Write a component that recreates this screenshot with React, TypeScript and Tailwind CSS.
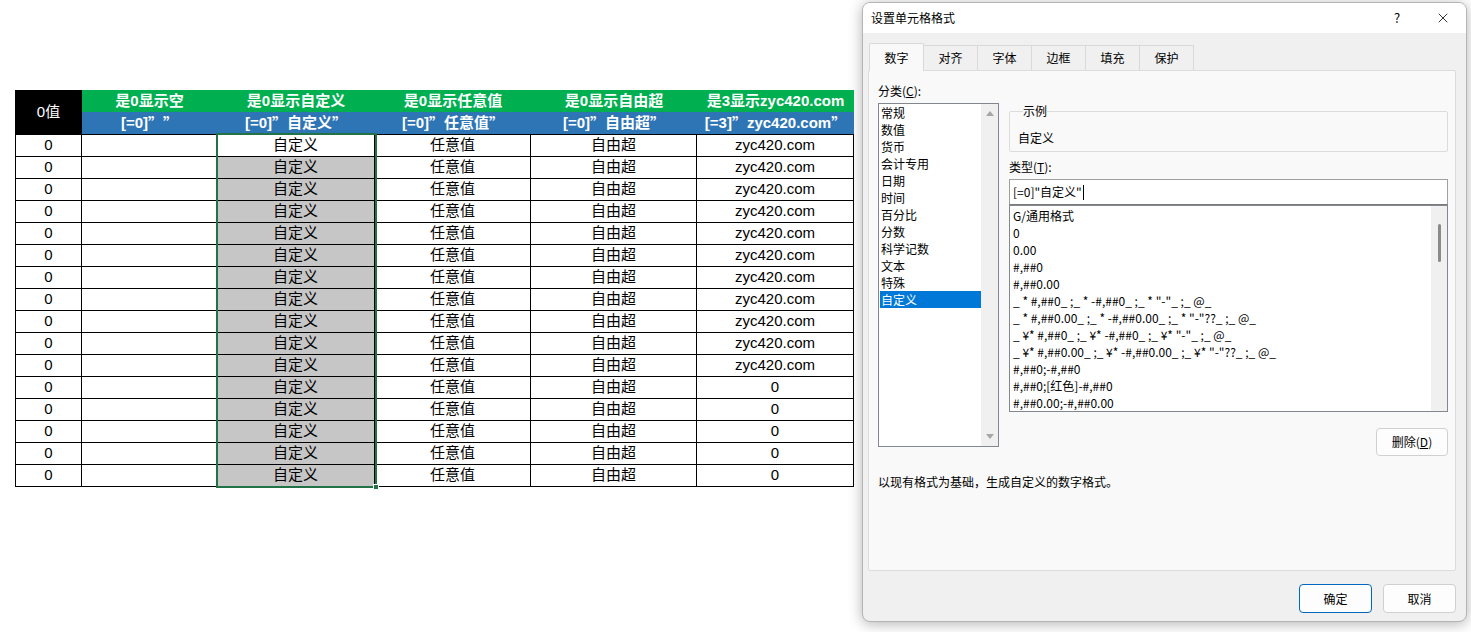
import { X } from "lucide-react";

const rows = Array.from({ length: 16 }, (_, i) => i);

const categories = [
  "常规",
  "数值",
  "货币",
  "会计专用",
  "日期",
  "时间",
  "百分比",
  "分数",
  "科学记数",
  "文本",
  "特殊",
  "自定义",
];

const formats = [
  "G/通用格式",
  "0",
  "0.00",
  "#,##0",
  "#,##0.00",
  '_ * #,##0_ ;_ * -#,##0_ ;_ * "-"_ ;_ @_',
  '_ * #,##0.00_ ;_ * -#,##0.00_ ;_ * "-"??_ ;_ @_',
  '_ ¥* #,##0_ ;_ ¥* -#,##0_ ;_ ¥* "-"_ ;_ @_',
  '_ ¥* #,##0.00_ ;_ ¥* -#,##0.00_ ;_ ¥* "-"??_ ;_ @_',
  "#,##0;-#,##0",
  "#,##0;[红色]-#,##0",
  "#,##0.00;-#,##0.00",
];

const tabs = ["数字", "对齐", "字体", "边框", "填充", "保护"];

// full-width CJK quote mark
const Q = () => <span className="font-['Noto_Sans_CJK_SC',sans-serif]">”</span>;

const Sheet = () => {
  return (
    <div className="relative ml-[15px] mt-[90px] shrink-0 font-['Liberation_Sans','Noto_Sans_CJK_SC',sans-serif] text-[15px] text-black">
      {/* header */}
      <div className="flex h-[44px]">
        <div className="flex w-[67px] items-center justify-center bg-black text-white">0值</div>
        <div className="flex flex-col">
          <div className="flex h-[22px] bg-[#00b050] font-bold text-white">
            <div className="flex w-[135px] items-center justify-center">是0显示空</div>
            <div className="flex w-[158px] items-center justify-center">是0显示自定义</div>
            <div className="flex w-[156px] items-center justify-center">是0显示任意值</div>
            <div className="flex w-[166px] items-center justify-center">是0显示自由超</div>
            <div className="flex w-[157px] items-center justify-center whitespace-nowrap">是3显示zyc420.com</div>
          </div>
          <div className="flex h-[22px] bg-[#2e75b6] font-bold text-white">
            <div className="flex w-[135px] items-center justify-center whitespace-pre">
              [=0]<Q />  <Q />
            </div>
            <div className="flex w-[158px] items-center justify-center whitespace-nowrap">
              [=0]<Q />自定义<Q />
            </div>
            <div className="flex w-[156px] items-center justify-center whitespace-nowrap">
              [=0]<Q />任意值<Q />
            </div>
            <div className="flex w-[166px] items-center justify-center whitespace-nowrap">
              [=0]<Q />自由超<Q />
            </div>
            <div className="flex w-[157px] items-center justify-center whitespace-nowrap">
              [=3]<Q />zyc420.com<Q />
            </div>
          </div>
        </div>
      </div>

      {/* body */}
      <div className="border-t border-black">
        {rows.map((i) => (
          <div key={i} className="flex h-[22px]">
            <div className="flex w-[67px] items-center justify-center border-b border-l border-r border-black">0</div>
            <div className="w-[135px] border-b border-r border-black"></div>
            <div
              className={
                i === 0
                  ? "flex w-[158px] items-center justify-center border-b border-r border-black bg-white"
                  : "flex w-[158px] items-center justify-center border-b border-r border-black bg-[#c6c6c6]"
              }
            >
              自定义
            </div>
            <div className="flex w-[156px] items-center justify-center border-b border-r border-black">任意值</div>
            <div className="flex w-[166px] items-center justify-center border-b border-r border-black">自由超</div>
            <div className="flex w-[157px] items-center justify-center border-b border-r border-black">
              {i < 11 ? "zyc420.com" : "0"}
            </div>
          </div>
        ))}
      </div>

      {/* selection */}
      <div className="pointer-events-none absolute left-[201px] top-[43px] h-[355px] w-[161px] border-2 border-[#217346]">
        <div className="absolute -bottom-[4px] -right-[4px] h-[6px] w-[6px] border border-white bg-[#217346]"></div>
      </div>
    </div>
  );
};

const Dialog = () => {
  return (
    <div className="ml-[8px] mt-[2px] flex h-[620px] w-[605px] shrink-0 flex-col overflow-hidden rounded-[8px] border border-[#b4b4b4] bg-[#f0f0f0] font-['Noto_Sans_CJK_SC',sans-serif] text-[12px] leading-[16px] text-black shadow-[0_2px_14px_rgba(0,0,0,0.3)]">
      {/* title bar */}
      <div className="flex h-[30px] items-center bg-white pl-[8px]">
        <span>设置单元格格式</span>
        <span className="ml-auto flex w-[46px] justify-center text-[13px]">?</span>
        <span className="flex w-[46px] justify-center">
          <X size={16} strokeWidth={1.2} />
        </span>
      </div>

      {/* tabs */}
      <div className="mt-[10px] flex h-[27px] items-end pl-[6px]">
        {tabs.map((t, i) =>
          i === 0 ? (
            <div
              key={t}
              className="relative z-10 -mb-px flex h-[28px] w-[55px] items-center justify-center rounded-t-[2px] border border-b-0 border-[#d9d9d9] bg-[#f9f9f9]"
            >
              {t}
            </div>
          ) : (
            <div
              key={t}
              className="-ml-px flex h-[25px] w-[55px] items-center justify-center border border-b-0 border-[#d9d9d9] bg-[#f0f0f0]"
            >
              {t}
            </div>
          )
        )}
      </div>

      {/* panel */}
      <div className="ml-[5px] mr-[10px] h-[501px] rounded-[2px] border border-[#dcdcdc] bg-[#f9f9f9] pl-[9px] pt-[12px]">
        <div>
          分类(<span className="underline">C</span>):
        </div>
        <div className="mt-[4px] flex items-start">
          {/* category list */}
          <div className="flex h-[344px] w-[121px] border border-[#828790] bg-white">
            <div className="flex-1 pl-[1px]">
              {categories.map((c, i) =>
                i === categories.length - 1 ? (
                  <div key={c} className="h-[17px] bg-[#0078d7] px-[1px] leading-[17px] text-white">
                    {c}
                  </div>
                ) : (
                  <div key={c} className="h-[17px] px-[1px] leading-[17px]">
                    {c}
                  </div>
                )
              )}
            </div>
            <div className="flex w-[17px] flex-col items-center justify-between bg-[#f0f0f0] py-[7px]">
              <svg width="8" height="5" viewBox="0 0 8 5">
                <path d="M4 0 L8 5 L0 5 Z" fill="#a6a6a6" />
              </svg>
              <svg width="8" height="5" viewBox="0 0 8 5">
                <path d="M0 0 L8 0 L4 5 Z" fill="#a6a6a6" />
              </svg>
            </div>
          </div>

          {/* right column */}
          <div className="ml-[10px] flex w-[439px] flex-col">
            <fieldset className="h-[49px] rounded-[2px] border border-[#dcdcdc] pl-[8px]">
              <legend className="ml-[5px] px-0 leading-[16px]">示例</legend>
              <div className="mt-[11px]">自定义</div>
            </fieldset>
            <div className="mt-[7px]">
              类型(<span className="underline">T</span>):
            </div>
            <div className="mt-[4px] flex h-[26px] items-center border border-[#a0a0a0] border-b-[#7a7a7a] bg-white pl-[3px]">
              <span className="whitespace-pre">[=0]"自定义"</span>
              <span className="ml-[1px] h-[15px] w-px bg-black"></span>
            </div>
            <div className="flex h-[207px] border border-[#828790] bg-white">
              <div className="flex-1 overflow-hidden pl-[3px] pt-[1px]">
                {formats.map((f) => (
                  <div key={f} className="h-[17px] whitespace-pre leading-[17px]">
                    {f}
                  </div>
                ))}
              </div>
              <div className="flex w-[16px] justify-center bg-[#f0f0f0] pt-[18px]">
                <div className="h-[38px] w-[3px] rounded-full bg-[#8a8a8a]"></div>
              </div>
            </div>
            <button className="mt-[16px] flex h-[28px] w-[72px] items-center justify-center self-end rounded-[4px] border border-[#d0d0d0] bg-[#fdfdfd]">
              删除(<span className="underline">D</span>)
            </button>
          </div>
        </div>
        <div className="mt-[18px]">以现有格式为基础，生成自定义的数字格式。</div>
      </div>

      {/* footer */}
      <div className="flex flex-1 items-start justify-end gap-[11px] pr-[10px] pt-[13px]">
        <button className="flex h-[29px] w-[73px] items-center justify-center rounded-[4px] border border-[#0067c0] bg-[#fdfdfd]">
          确定
        </button>
        <button className="flex h-[29px] w-[73px] items-center justify-center rounded-[4px] border border-[#d0d0d0] bg-[#fdfdfd]">
          取消
        </button>
      </div>
    </div>
  );
};

const App = () => {
  return (
    <div className="flex h-[632px] w-[1471px] items-start overflow-hidden bg-white">
      <Sheet />
      <Dialog />
    </div>
  );
};

export default App;
